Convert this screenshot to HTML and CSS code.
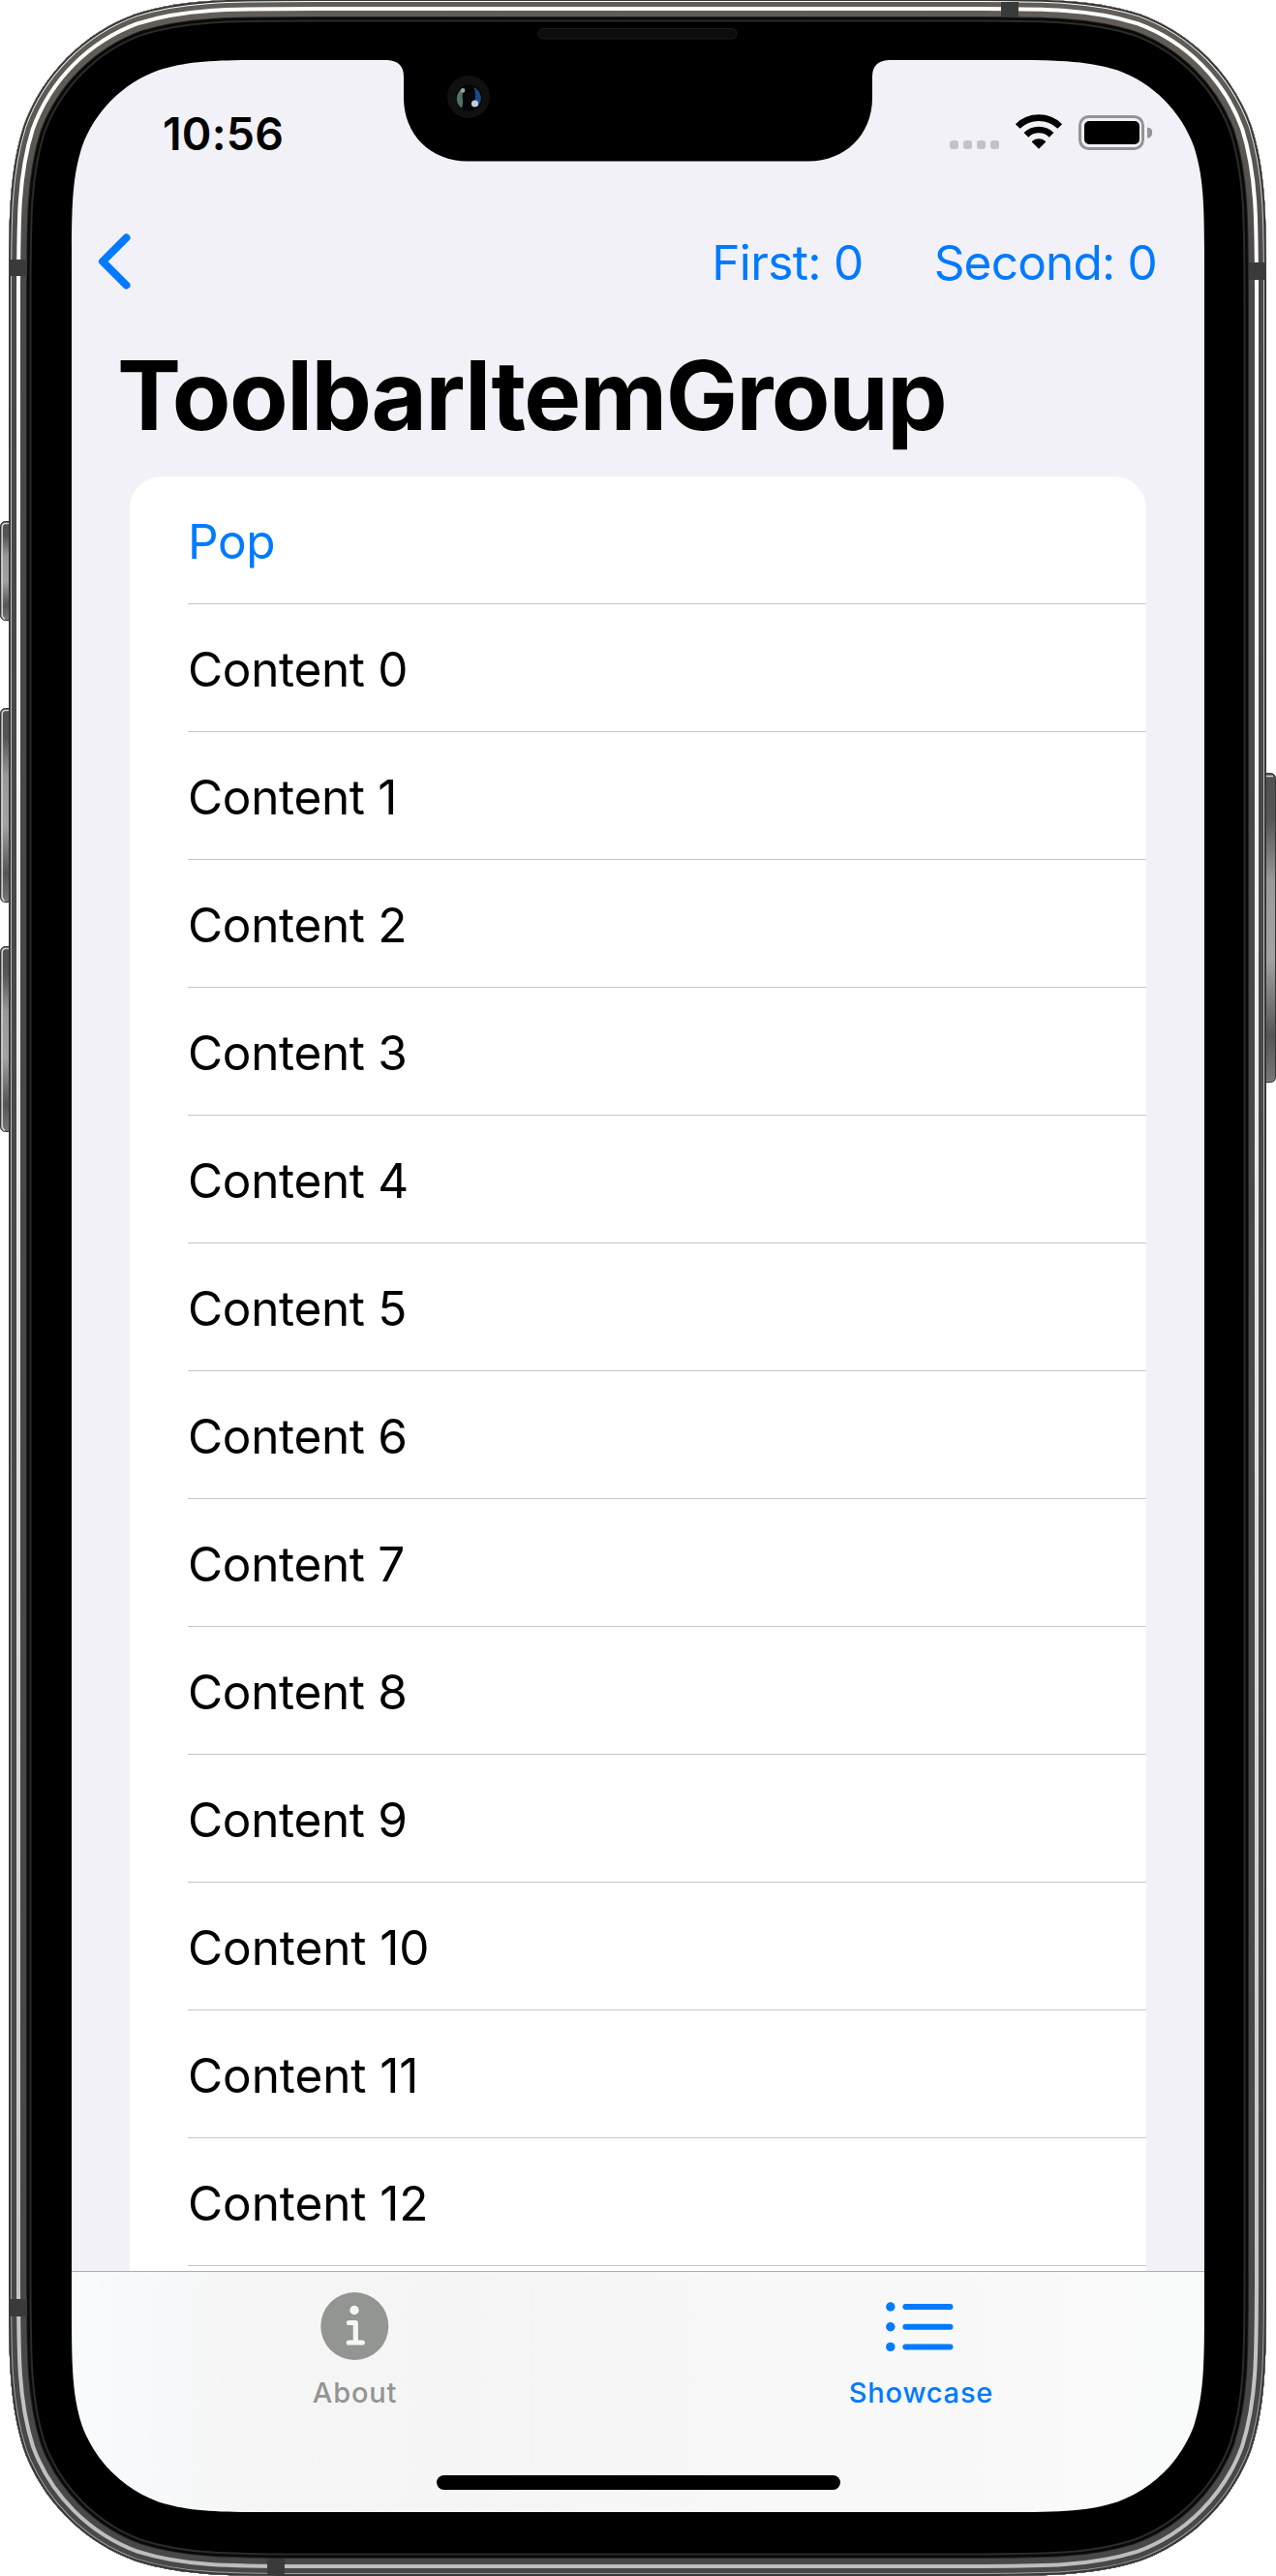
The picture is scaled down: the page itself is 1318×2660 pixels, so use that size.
FILE: index.html
```html
<!DOCTYPE html>
<html lang="en">
<head>
<meta charset="utf-8">
<title>ToolbarItemGroup</title>
<link rel="stylesheet" href="styles.css">
</head>
<body>
<div class="device">
  <main class="screen">
    <header class="status">
      <span class="time">10:56</span>
      <svg class="status-icons" width="210" height="40" viewBox="0 0 210 40" aria-hidden="true">
        <g fill="#c3c3c7"><rect x="1" y="27" width="9" height="9" rx="3"/><rect x="15" y="27" width="9" height="9" rx="3"/><rect x="29" y="27" width="9" height="9" rx="3"/><rect x="43" y="27" width="9" height="9" rx="3"/></g>
        <path d="M93 35.8l-6.8-6.7a1 1 0 0 1 0-1.400a11 11 0 0 1 13.600 0a1 1 0 0 1 0 1.400z"/>
        <g fill="none" stroke="#000" stroke-width="6.600"><path d="M79.900 21.400a18.700 18.700 0 0 1 26.200 0"/><path d="M71.200 12.500a31.200 31.200 0 0 1 43.600 0"/></g>
        <rect x="135.500" y="2.500" width="65" height="33" rx="9" fill="none" stroke="#949497" stroke-width="3"/>
        <rect x="140" y="7" width="57" height="24" rx="5"/>
        <path d="M205 13.500a5.500 5.500 0 0 1 0 11z" fill="#949497"/>
      </svg>
    </header>
    <nav class="navbar">
      <svg class="back" width="35" height="60" viewBox="0 0 35 60" aria-label="Back"><path d="M30.500 5.500L6 30L30.500 54.500" fill="none" stroke="#007aff" stroke-width="8" stroke-linecap="round" stroke-linejoin="round"/></svg>
      <span class="action first">First: 0</span>
      <span class="action second">Second: 0</span>
    </nav>
    <h1 class="title">ToolbarItemGroup</h1>
    <section class="scroll">
      <ul class="list">
        <li class="row link">Pop</li>
        <li class="row">Content 0</li>
        <li class="row">Content 1</li>
        <li class="row">Content 2</li>
        <li class="row">Content 3</li>
        <li class="row">Content 4</li>
        <li class="row">Content 5</li>
        <li class="row">Content 6</li>
        <li class="row">Content 7</li>
        <li class="row">Content 8</li>
        <li class="row">Content 9</li>
        <li class="row wide">Content 10</li>
        <li class="row wide">Content 11</li>
        <li class="row wide">Content 12</li>
      </ul>
    </section>
    <footer class="tabbar">
      <div class="tabs">
        <div class="tab">
          <svg width="72" height="72" viewBox="0 0 72 72" aria-hidden="true"><circle cx="35.300" cy="36" r="35" fill="#939592"/><circle cx="35" cy="19.500" r="4.700" fill="#f5f6f5"/><path d="M29.500 32.500H36.300V53M29.300 53H43.300" fill="none" stroke="#f5f6f5" stroke-width="5.200" stroke-linecap="round" stroke-linejoin="round"/></svg>
          <span class="label">About</span>
        </div>
        <div class="tab active">
          <svg width="72" height="72" viewBox="0 0 72 72" aria-hidden="true"><g fill="#007aff"><circle cx="3.800" cy="16" r="4.700"/><circle cx="3.800" cy="36.700" r="4.700"/><circle cx="3.800" cy="57.400" r="4.700"/></g><path d="M19.400 16h46M19.400 36.700h46M19.400 57.400h46" stroke="#007aff" stroke-width="6" stroke-linecap="round"/></svg>
          <span class="label">Showcase</span>
        </div>
      </div>
      <div class="home"></div>
    </footer>
  </main>
  <svg class="frame" width="1318" height="2660" viewBox="0 0 1318 2660" aria-hidden="true">
    <defs>
      <linearGradient id="shine" gradientUnits="userSpaceOnUse" x1="0" y1="0" x2="0" y2="2660"><stop offset="0" stop-color="#fff"/><stop offset=".2" stop-color="#f8f8f8"/><stop offset=".45" stop-color="#e9e9e9"/><stop offset="1" stop-color="#bdbdbd"/></linearGradient>
      <linearGradient id="steel" gradientUnits="userSpaceOnUse" x1="0" y1="0" x2="0" y2="2660"><stop offset="0" stop-color="#625d57"/><stop offset=".05" stop-color="#5c5852"/><stop offset=".11" stop-color="#484848"/><stop offset="1" stop-color="#484848"/></linearGradient>
      <linearGradient id="rim" gradientUnits="userSpaceOnUse" x1="0" y1="0" x2="0" y2="2660"><stop offset="0" stop-color="#fff"/><stop offset=".1" stop-color="#c4c4c4"/><stop offset="1" stop-color="#a0a0a0"/></linearGradient>
      <linearGradient id="button" x1="0" y1="0" x2="0" y2="1"><stop offset="0" stop-color="#505050"/><stop offset=".15" stop-color="#555"/><stop offset=".35" stop-color="#999"/><stop offset=".6" stop-color="#a2a2a2"/><stop offset=".85" stop-color="#555"/><stop offset="1" stop-color="#777"/></linearGradient>
      <path id="body" d="M325.400-1H991.600C1082.700-1 1128.200-1 1177.300 14.500C1230.800 34 1273 76.200 1292.500 129.700C1308 178.800 1308 224.300 1308 315.400V2343.600C1308 2434.700 1308 2480.200 1292.500 2529.300C1273 2582.800 1230.800 2625 1177.300 2644.500C1128.200 2660 1082.700 2660 991.600 2660H325.400C234.300 2660 188.800 2660 139.700 2644.500C86.200 2625 44 2582.800 24.500 2529.300C9 2480.200 9 2434.700 9 2343.600V315.400C9 224.300 9 178.800 24.500 129.700C44 76.200 86.200 34 139.700 14.500C188.800-1 234.300-1 325.400-1Z"/>
      <clipPath id="outline"><use href="#body"/></clipPath>
    </defs>
    <g fill="url(#button)" stroke="#363636" stroke-width="1">
      <rect x=".5" y="538.500" width="16" height="102" rx="5"/><rect x=".5" y="731.500" width="16" height="200" rx="5"/><rect x=".5" y="977.500" width="16" height="191" rx="5"/>
      <rect x="1301" y="798.500" width="16.500" height="319" rx="5"/>
    </g>
    <g fill="none" stroke="#d0d0d0" stroke-width="1.500"><path d="M9 540.500H5Q2.200 541 2.200 545V634Q2.200 638 5 639"/><path d="M9 733.500H5Q2.200 734 2.200 738V925Q2.200 929 5 930"/><path d="M9 979.500H5Q2.200 980 2.200 984V1162Q2.200 1166 5 1167"/><path d="M1308 801.500H1315"/></g>
    <g clip-path="url(#outline)">
      <path fill-rule="evenodd" d="M0-1H1318V2660H0ZM291.100 62H400Q417 63 417 79V101C417 139 445 166.500 483 166.500H835C873 166.500 901 139 901 101V79Q901 63 918 62H1026.900C1089.400 62 1120.700 62 1154.300 72.600C1191.100 86 1220 114.900 1233.400 151.700C1244 185.300 1244 216.600 1244 279.100V2376.900C1244 2439.400 1244 2470.700 1233.400 2504.300C1220 2541.100 1191.100 2570 1154.300 2583.400C1120.700 2594 1089.400 2594 1026.900 2594H291.100C228.600 2594 197.300 2594 163.700 2583.400C126.900 2570 98 2541.100 84.600 2504.300C74 2470.700 74 2439.400 74 2376.900V279.100C74 216.600 74 185.300 84.600 151.700C98 114.900 126.900 86 163.700 72.600C197.300 62 228.600 62 291.100 62Z"/>
      <g fill="none">
        <use href="#body" stroke="#2b2b2b" stroke-width="47"/>
        <use href="#body" stroke="#090909" stroke-width="43"/>
        <use href="#body" stroke="#252525" stroke-width="38"/>
        <use href="#body" stroke="url(#steel)" stroke-width="36"/>
        <use href="#body" stroke="url(#shine)" stroke-width="24"/>
        <use href="#body" stroke="url(#steel)" stroke-width="16"/>
        <use href="#body" stroke="url(#rim)" stroke-width="6"/>
        <use href="#body" stroke="#373838" stroke-width="4"/>
      </g>
      <g fill="#3a3a3a"><rect x="11" y="268" width="17" height="17"/><rect x="11" y="2374" width="17" height="18"/><rect x="1290" y="271" width="17" height="18"/><rect x="1034" y="2" width="18" height="15"/><rect x="276" y="2642" width="18" height="17"/></g>
    </g>
    <rect x="556" y="29.500" width="205" height="10.500" rx="5" fill="#0d0d0d" stroke="#1d1d1d"/>
    <circle cx="484" cy="100" r="22" fill="#101010"/>
    <circle cx="484.500" cy="101" r="13.500" fill="#040406"/>
    <path d="M478 91C471 95 469 106 477 111.500C480 104 475 99 480 91Z" fill="#4d7561"/>
    <path d="M489 90C497 93 500 104 493 110C487 106 494 99 489 90Z" fill="#174b86"/>
    <circle cx="478" cy="93.500" r="2.300" fill="#8fa99b"/><circle cx="490.500" cy="107" r="3.600" fill="#c6c6dc"/>
    <circle cx="484" cy="100" r="4.500" fill="#08080a"/>
  </svg>
</div>
</body>
</html>
```

FILE: styles.css
```css
* { box-sizing: border-box; }
body {
  margin: 0;
  background: #fff;
  font-family: Inter, "Liberation Sans", sans-serif;
  color: #000;
}
.device {
  position: relative;
  width: 1318px;
  height: 2660px;
  padding: 62px 74px 66px;
  overflow: hidden;
}
.frame {
  position: absolute;
  inset: 0;
  pointer-events: none;
}
.screen {
  display: flex;
  flex-direction: column;
  height: 2532px;
  background: #f2f1f7;
  border-radius: 130px;
  overflow: hidden;
}
.status {
  display: flex;
  justify-content: space-between;
  height: 141px;
  padding: 56px 54px 0 94px;
}
.time {
  height: 40px;
  font-size: 46.5px;
  line-height: 40px;
  font-weight: 600;
  letter-spacing: 0.2px;
}
.navbar {
  display: flex;
  align-items: center;
  height: 132px;
  padding: 0 49px 0 26px;
}
.back {
  margin-top: 1px;
  margin-right: auto;
}
.action {
  padding-top: 3px;
  font-size: 49.5px;
  line-height: 60px;
  letter-spacing: -0.8px;
  color: #007aff;
}
.first {
  margin-right: 73px;
  letter-spacing: -0.65px;
}
.title {
  margin: 0;
  height: 157px;
  padding: 11px 0 0 47px;
  font-size: 99px;
  line-height: 124px;
  font-weight: 700;
  letter-spacing: -1.5px;
  white-space: nowrap;
}
.scroll {
  flex: 1;
  min-height: 0;
  padding: 0 60px;
  overflow: hidden;
}
.list {
  height: 100%;
  margin: 0;
  padding: 0 0 0 60px;
  list-style: none;
  background: #fff;
  border-radius: 33px 33px 0 0;
}
.row {
  height: 132px;
  padding-top: 2px;
  border-bottom: 1px solid #c6c6c8;
  font-size: 49.5px;
  line-height: 130px;
  letter-spacing: -0.35px;
}
.wide { letter-spacing: -0.1px; }
.link { color: #007aff; }
.tabbar {
  height: 249px;
  border-top: 1px solid #adadae;
  background: linear-gradient(90deg, #f8fbfb 0, #f8f9fb 50px, #f5f6f5 180px, #f5f5f5 400px, #f8f8f8 720px, #f8f8f8 920px, #f9fbfa 100%);
}
.tabs {
  display: flex;
  height: 210px;
  padding-top: 20px;
}
.tab {
  flex: 1;
  display: flex;
  flex-direction: column;
  align-items: center;
  color: #939592;
}
.tab svg { overflow: visible; }
.active { color: #007aff; }
.label {
  margin-top: 13px;
  font-size: 29px;
  line-height: 40px;
  font-weight: 500;
  letter-spacing: 0.8px;
}
.home {
  width: 417px;
  height: 15px;
  margin: 0 auto;
  border-radius: 8px;
  background: #000;
}
```
